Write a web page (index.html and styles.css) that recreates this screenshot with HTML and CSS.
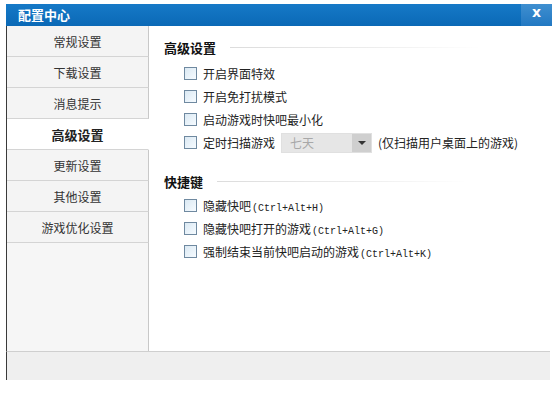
FILE: index.html
```html
<!DOCTYPE html>
<html lang="zh">
<head>
<meta charset="utf-8">
<title>配置中心</title>
<link rel="stylesheet" href="styles.css">
</head>
<body>
<div class="window">
  <div class="titlebar">
    <span class="title">配置中心</span>
    <span class="close">x</span>
  </div>
  <div class="main">
    <ul class="sidebar">
      <li class="nav">常规设置</li>
      <li class="nav">下载设置</li>
      <li class="nav">消息提示</li>
      <li class="nav active">高级设置</li>
      <li class="nav">更新设置</li>
      <li class="nav">其他设置</li>
      <li class="nav">游戏优化设置</li>
      <li class="filler"></li>
    </ul>
    <div class="content">
      <div class="section-head first"><span class="htext">高级设置</span><span class="hline"></span></div>
      <div class="row"><span class="cb"></span><span class="label">开启界面特效</span></div>
      <div class="row"><span class="cb"></span><span class="label">开启免打扰模式</span></div>
      <div class="row"><span class="cb"></span><span class="label">启动游戏时快吧最小化</span></div>
      <div class="row"><span class="cb"></span><span class="label">定时扫描游戏</span>
        <span class="select"><span class="sel-text">七天</span><span class="sel-btn"><span class="tri"></span></span></span>
        <span class="label note">(仅扫描用户桌面上的游戏)</span>
      </div>
      <div class="section-head second"><span class="htext">快捷键</span><span class="hline"></span></div>
      <div class="row"><span class="cb"></span><span class="label">隐藏快吧<span class="key">(Ctrl+Alt+H)</span></span></div>
      <div class="row"><span class="cb"></span><span class="label">隐藏快吧打开的游戏<span class="key">(Ctrl+Alt+G)</span></span></div>
      <div class="row"><span class="cb"></span><span class="label">强制结束当前快吧启动的游戏<span class="key">(Ctrl+Alt+K)</span></span></div>
    </div>
  </div>
  <div class="footer"></div>
</div>
</body>
</html>
```

FILE: styles.css
```css
* { box-sizing: border-box; }
html, body { margin: 0; padding: 0; background: #ffffff; }
body {
  font-family: "Noto Sans CJK SC", "DejaVu Sans", sans-serif;
  font-size: 12px;
  color: #222;
  padding: 4px 6px 0 6px;
}
.window { width: 546px; }
.titlebar {
  height: 22px;
  background: linear-gradient(#1679c7, #0b69b6);
  display: flex;
  align-items: center;
  justify-content: space-between;
}
.title {
  color: #fff;
  font-weight: bold;
  font-size: 13px;
  padding-left: 12px;
  line-height: 22px;
}
.close {
  width: 31px;
  height: 22px;
  background: linear-gradient(#3f8fd0, #2278c2);
  color: #fff;
  font-weight: bold;
  font-family: "DejaVu Sans", sans-serif;
  font-size: 14px;
  line-height: 16px;
  text-align: center;
}
.main {
  display: flex;
  height: 325px;
  border-left: 1px solid #3a3a3a;
}
.sidebar {
  list-style: none;
  margin: 0;
  padding: 0;
  width: 142px;
  display: flex;
  flex-direction: column;
}
.nav {
  height: 31px;
  border-bottom: 1px solid #d4d4d4;
  border-right: 1px solid #c8c8c8;
  background: #f4f4f4;
  text-align: center;
  line-height: 30px;
  padding-top: 1px;
  color: #333;
}
.nav.active {
  background: #ffffff;
  border-right-color: #ffffff;
  font-weight: bold;
  font-size: 13px;
  color: #222;
}
.filler {
  flex: 1;
  background: #f6f6f6;
  border-right: 1px solid #c8c8c8;
}
.content {
  flex: 1;
  padding-left: 15px;
}
.section-head {
  display: flex;
  align-items: center;
  height: 20px;
}
.section-head.first { margin-top: 11px; margin-bottom: 5px; }
.section-head.second { margin-top: 17px; margin-bottom: 3px; }
.htext {
  font-weight: bold;
  font-size: 13px;
  color: #111;
}
.hline {
  margin-left: 14px;
  width: 250px;
  height: 1px;
  background: linear-gradient(to right, #dcdcdc, #eeeeee 60%, rgba(255,255,255,0));
}
.row {
  display: flex;
  align-items: center;
  height: 23px;
  padding-left: 20px;
}
.cb {
  width: 13px;
  height: 13px;
  border: 1px solid #6f89a0;
  background: linear-gradient(135deg, #dbe9f3, #f6fbff);
  margin-right: 6px;
  flex: none;
}
.label { white-space: nowrap; color: #222; }
.key {
  font-family: "Liberation Mono", monospace;
  font-size: 10px;
  margin-left: 1px;
}
.select {
  display: flex;
  width: 91px;
  height: 20px;
  margin-left: 6px;
  background: #e6e6e6;
  border: 1px solid #e0e0e0;
}
.sel-text {
  flex: 1;
  color: #a8a8a8;
  padding-left: 8px;
  line-height: 18px;
}
.sel-btn {
  width: 19px;
  background: #cfcfcf;
  display: flex;
  align-items: center;
  justify-content: center;
}
.tri {
  width: 0;
  height: 0;
  border-left: 4px solid transparent;
  border-right: 4px solid transparent;
  border-top: 4px solid #333;
}
.note { margin-left: 6px; }
.footer {
  height: 29px;
  background: #efefef;
  border-top: 1px solid #cfcfcf;
  border-left: 1px solid #3a3a3a;
  width: 544px;
}
```
